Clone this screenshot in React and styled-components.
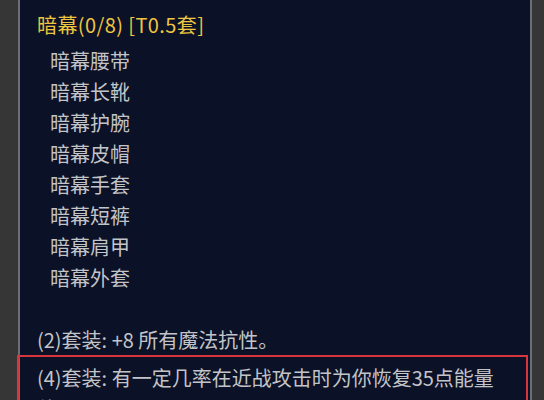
import React from "react";
import styled, { createGlobalStyle } from "styled-components";

const Global = createGlobalStyle`
  html, body { margin: 0; padding: 0; background: #363636; }
  body { width: 544px; height: 400px; overflow: hidden; }
  #root { height: 400px; }
`;

const Page = styled.div`
  display: flex;
  width: 544px;
  height: 400px;
  background: #363636;
  overflow: hidden;
  font-family: "Noto Sans CJK SC", "Noto Sans", sans-serif;
`;

const Gutter = styled.div`
  flex: 0 0 ${(p) => p.$w}px;
  background: #363636;
`;

const Panel = styled.div`
  flex: 1;
  background: #0b1126;
  border-left: 2px solid #6b6e75;
  border-right: 2px solid #6b6e75;
  padding: 9px 0 0 17px;
  font-size: 20px;
  line-height: 31px;
  color: #c3c4c8;
`;

const Title = styled.div`
  color: #eec63f;
  margin-bottom: 5px;
  letter-spacing: 0.4px;
`;

const ItemList = styled.div`
  display: flex;
  flex-direction: column;
  padding-left: 13px;
  margin-bottom: 31px;
`;

const Item = styled.div``;

const Bonus = styled.div``;

const Highlight = styled.div`
  margin-left: -20px;
  width: 511px;
  box-sizing: border-box;
  border: 2px solid #d8363d;
  padding: 5px 20px 0 18px;
`;

const items = ["暗幕腰带", "暗幕长靴", "暗幕护腕", "暗幕皮帽", "暗幕手套", "暗幕短裤", "暗幕肩甲", "暗幕外套"];

export default function App() {
  return (
    <Page>
      <Global />
      <Gutter $w={18} />
      <Panel>
        <Title>暗幕(0/8) [T0.5套]</Title>
        <ItemList>
          {items.map((t) => (
            <Item key={t}>{t}</Item>
          ))}
        </ItemList>
        <Bonus>(2)套装: +8 所有魔法抗性。</Bonus>
        <Highlight>(4)套装: 有一定几率在近战攻击时为你恢复35点能量值。</Highlight>
      </Panel>
      <Gutter $w={12} />
    </Page>
  );
}
